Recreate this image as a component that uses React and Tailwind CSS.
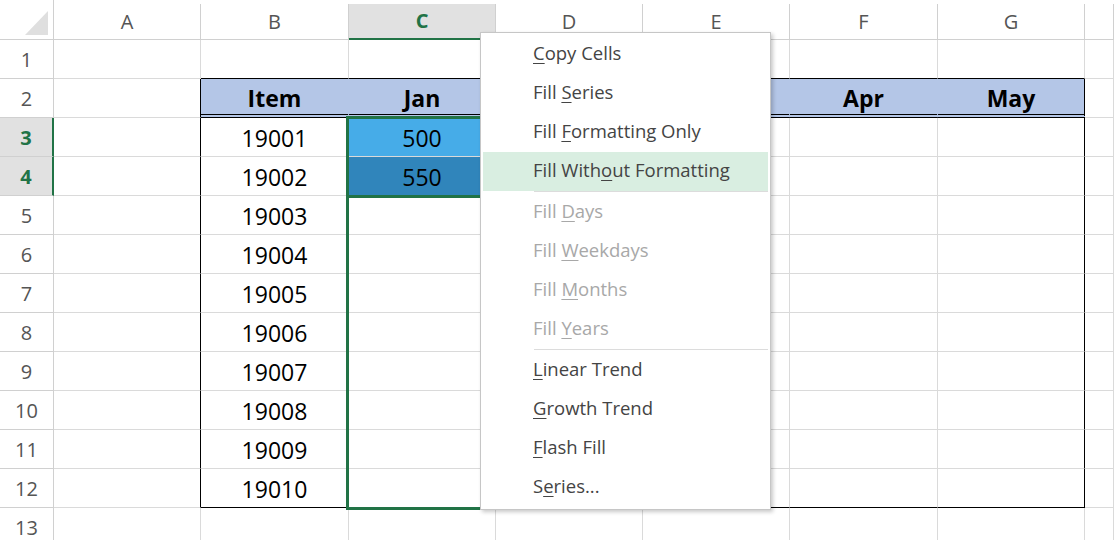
import React from 'react';

const COLS = ['A', 'B', 'C', 'D', 'E', 'F', 'G', ''];
const HEAD = { 1: 'Item', 2: 'Jan', 3: 'Feb', 4: 'Mar', 5: 'Apr', 6: 'May' };

function cellText(r, c) {
  if (r === 2 && HEAD[c]) return HEAD[c];
  if (c === 1 && r >= 3 && r <= 12) return String(19001 + r - 3);
  if (c === 2 && r === 3) return '500';
  if (c === 2 && r === 4) return '550';
  return '';
}

function cellCls(r, c) {
  const inTable = c >= 1 && c <= 6;
  let right = 'border-r border-r-[#dadada]';
  let bottom = 'border-b border-b-[#dadada]';
  let bg = 'bg-white';
  let extra = 'font-normal pt-[2px]';
  if ((c === 0 || c === 6) && r >= 2 && r <= 12) right = 'border-r border-r-black';
  if (inTable && (r === 1 || r === 12)) bottom = 'border-b border-b-black';
  if (inTable && r === 2) {
    bottom = 'border-b-4 border-double border-b-black';
    bg = 'bg-[#b4c6e7]';
    extra = 'font-bold pt-[4px]';
    if (c !== 6) right = 'border-r border-r-[#b4c6e7]';
  }
  if (c === 2 && r === 3) bg = 'bg-[#46ace8]';
  if (c === 2 && r === 4) bg = 'bg-[#3085bb]';
  return `relative flex items-center justify-center text-[23px] text-black ${right} ${bottom} ${bg} ${extra}`;
}

const MENU = [
  {
    disabled: false,
    items: [
      ['', 'C', 'opy Cells'],
      ['Fill ', 'S', 'eries'],
      ['Fill ', 'F', 'ormatting Only'],
      ['Fill With', 'o', 'ut Formatting', true],
    ],
  },
  {
    disabled: true,
    items: [
      ['Fill ', 'D', 'ays'],
      ['Fill ', 'W', 'eekdays'],
      ['Fill ', 'M', 'onths'],
      ['Fill ', 'Y', 'ears'],
    ],
  },
  {
    disabled: false,
    items: [
      ['', 'L', 'inear Trend'],
      ['', 'G', 'rowth Trend'],
      ['', 'F', 'lash Fill'],
      ['S', 'e', 'ries...'],
    ],
  },
];

function Menu() {
  return (
    <div className="absolute left-[480px] top-[32px] z-20 w-[291px] border border-[#c6c6c6] bg-white py-[2px] shadow-[2px_2px_4px_rgba(0,0,0,0.22)] font-['Open_Sans',sans-serif] text-[18.5px]">
      {MENU.map((g, gi) => (
        <div key={gi}>
          {gi > 0 && <div className="ml-[53px] mr-[2px] h-[2px] border-t border-t-[#dcdcdc]" />}
          {g.items.map(([a, u, b, hl], i) => (
            <div
              key={i}
              className={`mx-[2px] flex h-[39px] items-center pb-[3px] pl-[50px] ${hl ? 'bg-[#d9eee1]' : ''} ${g.disabled ? 'text-[#a8a8a8]' : 'text-[#444444]'}`}
            >
              <span className="whitespace-pre">
                {a}
                <span className="underline decoration-1 underline-offset-[3px]">{u}</span>
                {b}
              </span>
            </div>
          ))}
        </div>
      ))}
    </div>
  );
}

export default function App() {
  const rows = [];
  for (let r = 1; r <= 13; r++) rows.push(r);
  return (
    <div className="relative h-[540px] w-[1114px] overflow-hidden bg-white font-['Open_Sans',sans-serif]">
      <div className="grid grid-cols-[54px_147px_148px_147px_147px_147px_148px_147px_1fr] grid-rows-[40px_repeat(13,39px)]">
        <div className="border-r border-b border-r-[#d0d0d0] border-b-[#d0d0d0] bg-white">
          <svg width="53" height="39" viewBox="0 0 53 39">
            <polygon points="25,35 48,35 48,11" fill="#dfdfdf" />
          </svg>
        </div>
        {COLS.map((L, c) =>
          c === 2 ? (
            <div
              key={c}
              className="mt-[4px] flex items-center justify-center border-r border-b-2 border-r-[#d0d0d0] border-b-[#217346] bg-[#e1e1e1] text-[20px] font-bold text-[#217346]"
            >
              {L}
            </div>
          ) : (
            <div
              key={c}
              className="mt-[4px] flex items-center justify-center border-r border-b border-r-[#d0d0d0] border-b-[#d0d0d0] text-[20px] text-[#555555]"
            >
              {L}
            </div>
          )
        )}
        {rows.map((r) => (
          <React.Fragment key={r}>
            {r === 3 || r === 4 ? (
              <div className="flex items-center justify-center border-r-2 border-b border-r-[#217346] border-b-[#d0d0d0] bg-[#e1e1e1] pt-[2px] text-[20px] font-bold text-[#217346]">
                {r}
              </div>
            ) : (
              <div className="flex items-center justify-center border-r border-b border-r-[#d0d0d0] border-b-[#d0d0d0] pt-[2px] text-[20px] text-[#555555]">
                {r}
              </div>
            )}
            {COLS.map((L, c) => (
              <div key={c} className={cellCls(r, c)}>
                {cellText(r, c)}
                {r === 3 && c === 2 && (
                  <>
                    <div className="pointer-events-none absolute -left-[3px] -top-[2px] z-10 h-[394px] w-[150px] border-[3px] border-[#217346]" />
                    <div className="pointer-events-none absolute -left-[3px] -top-[2px] z-10 h-[82px] w-[150px] border-[3px] border-[#217346]" />
                  </>
                )}
              </div>
            ))}
          </React.Fragment>
        ))}
      </div>
      <Menu />
    </div>
  );
}
